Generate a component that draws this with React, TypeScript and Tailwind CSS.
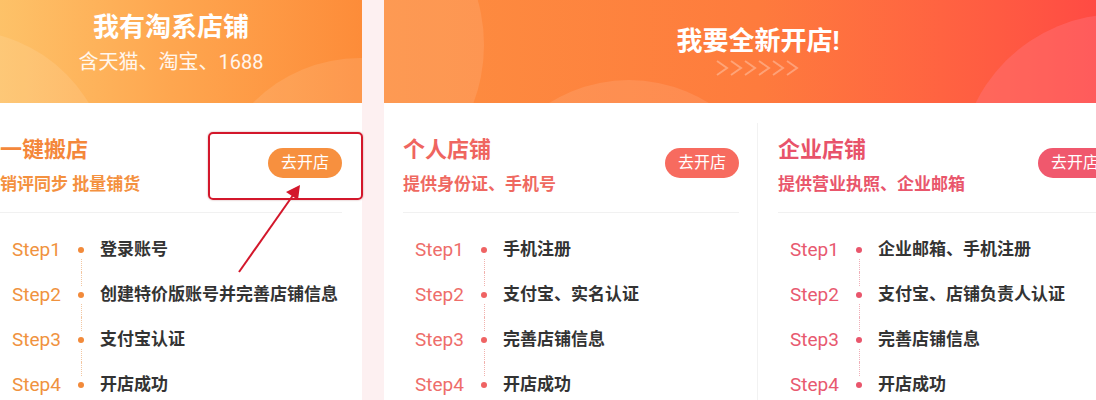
import React from "react";

type Theme = {
  title: string;
  sub: string;
  btn: string;
  step: string;
  dot: string;
  line: string;
};

const orange: Theme = {
  title: "text-[#f4873b]",
  sub: "text-[#f4913f]",
  btn: "bg-[#f7903f]",
  step: "text-[#f0923e]",
  dot: "bg-[#f28a3a]",
  line: "border-[#f2c7a2]",
};

const coral: Theme = {
  title: "text-[#ef6560]",
  sub: "text-[#ef6961]",
  btn: "bg-[#f76b5f]",
  step: "text-[#ee6d6a]",
  dot: "bg-[#ef6363]",
  line: "border-[#f1b2ae]",
};

const rose: Theme = {
  title: "text-[#e8536a]",
  sub: "text-[#e9566b]",
  btn: "bg-[#f0586d]",
  step: "text-[#e8596f]",
  dot: "bg-[#e9566c]",
  line: "border-[#f0aeb8]",
};

function Steps({ items, theme }: { items: string[]; theme: Theme }) {
  return (
    <div className="pt-[14px]">
      {items.map((text, i) => (
        <div key={i} className="flex items-center h-[45px]">
          <span className={`ml-3 w-[60px] text-[19px] leading-none ${theme.step}`}>
            Step{i + 1}
          </span>
          <div className="w-[18px] h-full flex flex-col items-center">
            <div
              className={`flex-1 mb-[6px] border-l border-dotted ${
                i === 0 ? "border-transparent" : theme.line
              }`}
            />
            <div className={`w-[6px] h-[6px] rounded-full ${theme.dot}`} />
            <div
              className={`flex-1 mt-[6px] border-l border-dotted ${
                i === items.length - 1 ? "border-transparent" : theme.line
              }`}
            />
          </div>
          <span className="ml-[10px] text-[17px] font-bold text-[#333]">{text}</span>
        </div>
      ))}
    </div>
  );
}

function ShopHead({ title, sub, theme }: { title: string; sub: string; theme: Theme }) {
  return (
    <div className="flex items-center justify-between pb-[16px] border-b border-[#f1f1f1]">
      <div>
        <div className={`text-[22px] leading-[30px] font-bold ${theme.title}`}>{title}</div>
        <div className={`mt-[7px] text-[17px] leading-[24px] font-bold ${theme.sub}`}>{sub}</div>
      </div>
      <button
        className={`mb-[5px] w-[74px] h-[30px] rounded-full text-white text-[16px] leading-none ${theme.btn}`}
      >
        去开店
      </button>
    </div>
  );
}

function Chevrons() {
  return (
    <svg width="86" height="16" viewBox="0 0 86 16" fill="none" className="mt-[3px]">
      {[0, 1, 2, 3, 4, 5].map((i) => (
        <polyline
          key={i}
          points={`${2 + i * 14},1 ${12 + i * 14},8 ${2 + i * 14},15`}
          stroke="white"
          strokeOpacity="0.3"
          strokeWidth="2"
        />
      ))}
    </svg>
  );
}

export default function App() {
  return (
    <div className="relative w-[1096px] h-[400px] overflow-hidden bg-[#fdf0f1] flex font-['Roboto','Noto_Sans_CJK_SC',sans-serif]">
      {/* 淘系店铺 */}
      <div className="ml-[-20px] w-[382px] shrink-0 bg-white">
        <div className="relative h-[103px] overflow-hidden bg-gradient-to-r from-[#fdc56b] via-[#fea64f] to-[#fd8c39] flex flex-col items-center text-white">
          <div className="absolute left-[-170px] top-[30px] w-[300px] h-[300px] rounded-full bg-white/10" />
          <div className="absolute left-[230px] top-[58px] w-[300px] h-[300px] rounded-full bg-white/10" />
          <div className="relative pt-[11px] text-[26px] leading-[32px] font-bold">我有淘系店铺</div>
          <div className="relative mt-[5px] text-[20px] leading-[28px] text-white/90">含天猫、淘宝、1688</div>
        </div>
        <div className="px-[20px] pt-[32px]">
          <ShopHead title="一键搬店" sub="销评同步 批量铺货" theme={orange} />
          <Steps
            items={["登录账号", "创建特价版账号并完善店铺信息", "支付宝认证", "开店成功"]}
            theme={orange}
          />
        </div>
      </div>

      {/* 全新开店 */}
      <div className="ml-[22px] w-[748px] shrink-0 bg-white">
        <div className="relative h-[103px] overflow-hidden bg-gradient-to-r from-[#fd8f40] via-[#fe7b3d] to-[#ff4444] flex flex-col items-center text-white">
          <div className="absolute left-[-230px] top-[-120px] w-[330px] h-[330px] rounded-full bg-white/10" />
          <div className="absolute left-[95px] top-[80px] w-[300px] h-[300px] rounded-full bg-white/10" />
          <div className="absolute left-[575px] top-[14px] w-[320px] h-[320px] rounded-full bg-[#ff7c8a]/35" />
          <div className="relative pt-[25px] text-[26px] leading-[32px] font-bold">我要全新开店!</div>
          <Chevrons />
        </div>
        <div className="flex pt-[20px]">
          <div className="w-[373px] pl-[19px] pr-[18px] pt-[12px]">
            <ShopHead title="个人店铺" sub="提供身份证、手机号" theme={coral} />
            <Steps items={["手机注册", "支付宝、实名认证", "完善店铺信息", "开店成功"]} theme={coral} />
          </div>
          <div className="w-[375px] border-l border-[#f2f2f2] px-[20px] pt-[12px]">
            <ShopHead title="企业店铺" sub="提供营业执照、企业邮箱" theme={rose} />
            <Steps
              items={["企业邮箱、手机注册", "支付宝、店铺负责人认证", "完善店铺信息", "开店成功"]}
              theme={rose}
            />
          </div>
        </div>
      </div>

      {/* 标注 */}
      <div className="absolute left-[208px] top-[132px] w-[155px] h-[68px] rounded-[5px] border-2 border-[#d3172b] shadow-[0_0_2px_rgba(120,0,0,0.4)]" />
      <svg className="absolute left-0 top-0" width="1096" height="400" fill="none">
        <line x1="239" y1="272" x2="296" y2="191" stroke="#d3172b" strokeWidth="2" />
        <polygon points="300,185 298,200 286,192" fill="#d3172b" />
      </svg>
    </div>
  );
}
